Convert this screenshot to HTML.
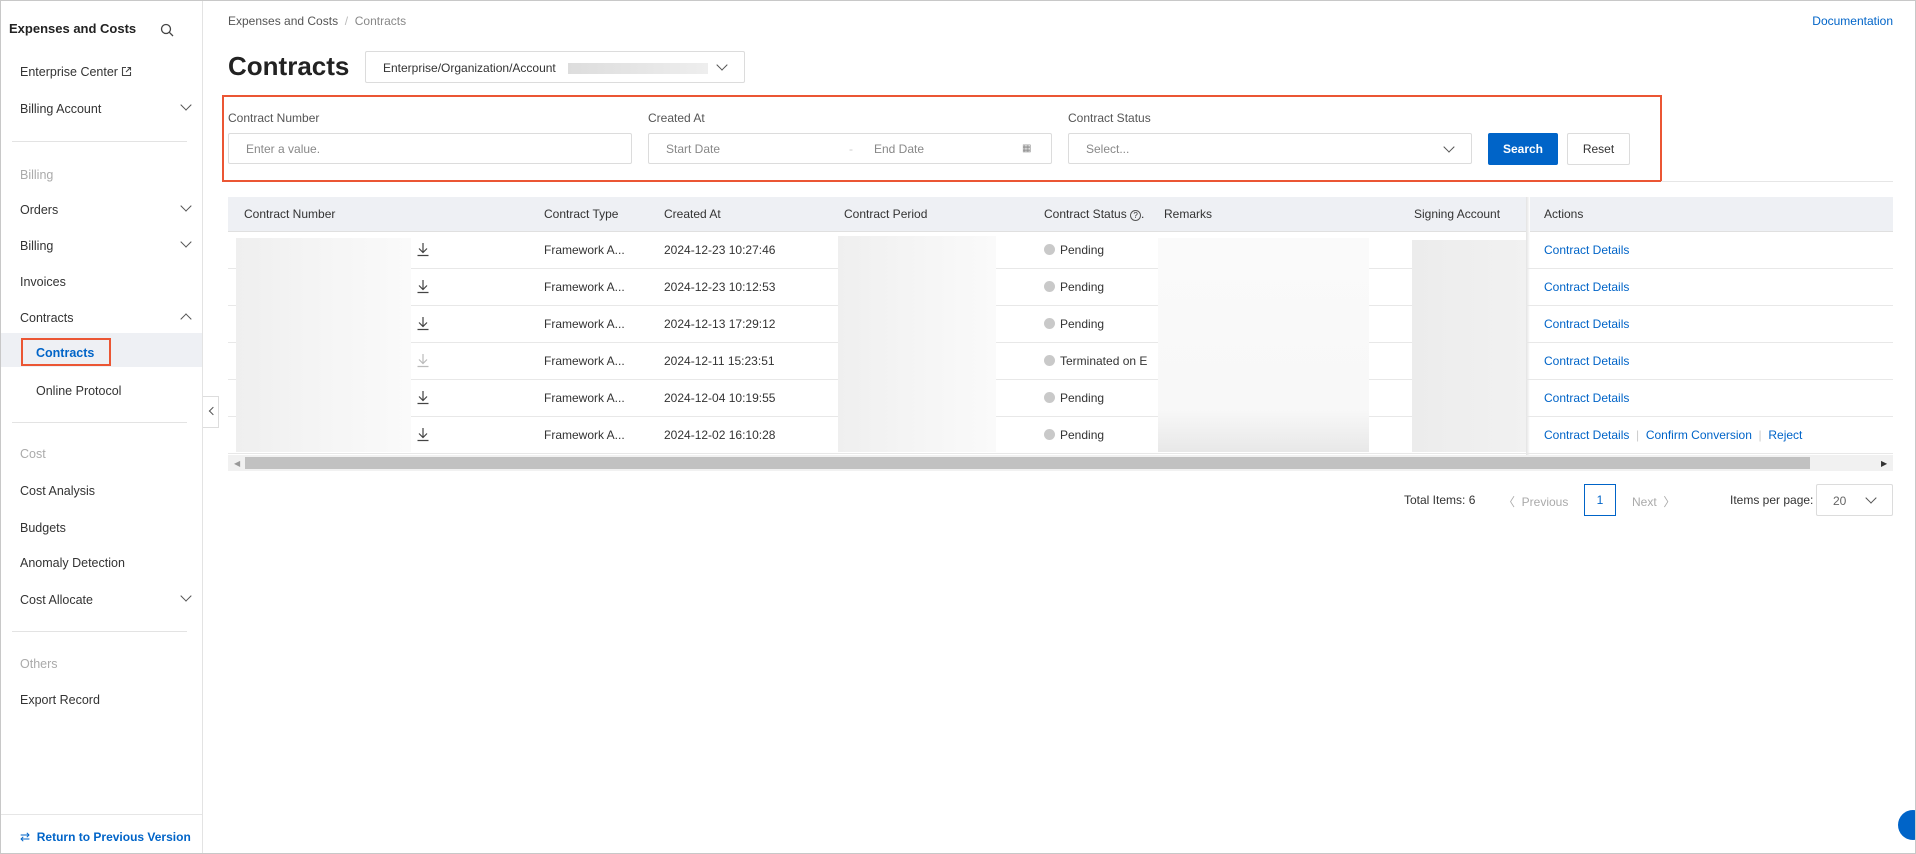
<!DOCTYPE html>
<html><head><meta charset="utf-8"><style>
*{box-sizing:border-box;margin:0;padding:0}
body{width:1916px;height:854px;position:relative;overflow:hidden;background:#fff;font-family:"Liberation Sans",sans-serif;font-size:12px;color:#333;}
.a{position:absolute;white-space:nowrap}
.frame{position:absolute;left:0;top:0;width:1916px;height:854px;border:1px solid #c8c8c8;z-index:50;pointer-events:none}
.side{position:absolute;left:0;top:0;width:203px;height:854px;border-right:1px solid #e3e3e3;background:#fff}
.si{position:absolute;left:20px;font-size:12.5px;color:#333}
.grey{color:#aaa}
.div{position:absolute;left:12px;width:175px;height:1px;background:#e3e3e3}
.chev{position:absolute;width:8px;height:8px;border-right:1.3px solid #555;border-bottom:1.3px solid #555}
.inp{position:absolute;height:31px;border:1px solid #dcdcdc;background:#fff;border-radius:2px}
.ph{position:absolute;top:8px;color:#888;font-size:12px}
.th{position:absolute;top:0;line-height:35px;font-weight:normal;color:#333}
.rowl{position:absolute;left:228px;width:1665px;height:1px;background:#e8e8e8}
.cell{position:absolute;font-size:12px;color:#333}
.blur{position:absolute;background:linear-gradient(90deg,#efefef,#f6f6f6 60%,#fafafa)}
.lnk{color:#0064c8}
.dot{display:inline-block;width:11px;height:11px;border-radius:50%;background:#c9c9c9;vertical-align:-1px;margin-right:5px}
</style></head><body>
<div class="frame"></div>
<div class="side">
 <div class="a" style="left:9px;top:21px;font-size:13px;font-weight:bold;color:#222">Expenses and Costs</div>
 <svg class="a" style="left:160px;top:23px" width="14" height="14" viewBox="0 0 14 14"><circle cx="6" cy="6" r="4.5" fill="none" stroke="#444" stroke-width="1.3"/><path d="M9.3 9.3L13 13" stroke="#444" stroke-width="1.3"/></svg>
 <div class="si" style="top:65px">Enterprise Center <svg width="11" height="11" viewBox="0 0 11 11" style="vertical-align:-1px"><path d="M5 1.5H1.5v8h8V6M6.5 1.5h3v3M9.5 1.5L5 6" fill="none" stroke="#444" stroke-width="1.1"/></svg></div>
 <div class="si" style="top:102px">Billing Account</div><div class="chev" style="left:182px;top:101px;transform:rotate(45deg)"></div>
 <div class="div" style="top:141px"></div>
 <div class="si grey" style="top:168px">Billing</div>
 <div class="si" style="top:203px">Orders</div><div class="chev" style="left:182px;top:202px;transform:rotate(45deg)"></div>
 <div class="si" style="top:239px">Billing</div><div class="chev" style="left:182px;top:238px;transform:rotate(45deg)"></div>
 <div class="si" style="top:275px">Invoices</div>
 <div class="si" style="top:311px">Contracts</div><div class="chev" style="left:182px;top:315px;transform:rotate(-135deg)"></div>
 <div class="a" style="left:1px;top:333px;width:201px;height:34px;background:#eef0f4"></div>
 <div class="a" style="left:21px;top:338px;width:90px;height:28px;border:2px solid #eb5634"></div>
 <div class="si" style="left:36px;top:346px;color:#0064c8;font-weight:bold">Contracts</div>
 <div class="si" style="left:36px;top:384px">Online Protocol</div>
 <div class="div" style="top:422px"></div>
 <div class="si grey" style="top:447px">Cost</div>
 <div class="si" style="top:484px">Cost Analysis</div>
 <div class="si" style="top:521px">Budgets</div>
 <div class="si" style="top:556px">Anomaly Detection</div>
 <div class="si" style="top:593px">Cost Allocate</div><div class="chev" style="left:182px;top:592px;transform:rotate(45deg)"></div>
 <div class="div" style="top:631px"></div>
 <div class="si grey" style="top:657px">Others</div>
 <div class="si" style="top:693px">Export Record</div>
 <div class="a" style="left:1px;top:814px;width:201px;height:1px;background:#e6e6e6"></div>
 <div class="si" style="top:830px;color:#0064c8;font-weight:bold;font-size:12px"><span style="font-weight:normal">⇄</span>&nbsp; Return to Previous Version</div>
</div>
<div class="a" style="left:203px;top:396px;width:16px;height:32px;border:1px solid #ddd;border-left:none;background:#fff"></div>
<div class="chev" style="left:210px;top:408px;width:6px;height:6px;transform:rotate(135deg)"></div>

<div class="a" style="left:228px;top:14px;color:#555">Expenses and Costs <span style="color:#bbb">&nbsp;/&nbsp;</span> <span style="color:#888">Contracts</span></div>
<div class="a lnk" style="right:23px;top:14px">Documentation</div>
<div class="a" style="left:228px;top:51px;font-size:26px;font-weight:bold;color:#222">Contracts</div>
<div class="inp" style="left:365px;top:51px;width:380px;height:32px"><span class="ph" style="left:17px;color:#333;top:9px">Enterprise/Organization/Account</span><div class="a" style="left:202px;top:11px;width:140px;height:11px;background:linear-gradient(90deg,#ddd,#eee)"></div><div class="chev" style="left:352px;top:9px;transform:rotate(45deg)"></div></div>

<div class="a" style="left:222px;top:95px;width:1440px;height:87px;border:2px solid #eb5634"></div>
<div class="a" style="left:1661px;top:181px;width:232px;height:1px;background:#e6e6e6"></div>
<div class="a" style="left:228px;top:111px;color:#555">Contract Number</div>
<div class="a" style="left:648px;top:111px;color:#555">Created At</div>
<div class="a" style="left:1068px;top:111px;color:#555">Contract Status</div>
<div class="inp" style="left:228px;top:133px;width:404px"><span class="ph" style="left:17px">Enter a value.</span></div>
<div class="inp" style="left:648px;top:133px;width:404px"><span class="ph" style="left:17px">Start Date</span><span class="ph" style="left:200px;color:#ccc">-</span><span class="ph" style="left:225px">End Date</span><span class="ph" style="left:373px;font-size:10px;top:9px">▦</span></div>
<div class="inp" style="left:1068px;top:133px;width:404px"><span class="ph" style="left:17px">Select...</span><div class="chev" style="left:376px;top:9px;transform:rotate(45deg)"></div></div>
<div class="a" style="left:1488px;top:133px;width:70px;height:32px;background:#0064c8;border-radius:2px;color:#fff;font-weight:bold;text-align:center;line-height:32px">Search</div>
<div class="a" style="left:1567px;top:133px;width:63px;height:32px;border:1px solid #dcdcdc;border-radius:2px;color:#333;text-align:center;line-height:30px">Reset</div>

<div class="a" style="left:228px;top:197px;width:1665px;height:35px;background:#eef0f4;border-bottom:1px solid #e0e0e0">
 <div class="th" style="left:16px">Contract Number</div>
 <div class="th" style="left:316px">Contract Type</div>
 <div class="th" style="left:436px">Created At</div>
 <div class="th" style="left:616px">Contract Period</div>
 <div class="th" style="left:816px">Contract Status <span style="display:inline-block;width:11px;height:11px;border:1px solid #555;border-radius:50%;font-size:8px;line-height:9px;text-align:center;vertical-align:0">?</span>.</div>
 <div class="th" style="left:936px">Remarks</div>
 <div class="th" style="left:1186px">Signing Account</div>
 <div class="th" style="left:1316px">Actions</div>
</div>
<div class="a" style="left:1526px;top:197px;width:4px;height:258px;background:linear-gradient(90deg,#e2e2e2,#fff)"></div>
<div class="rowl" style="top:268px"></div><div class="rowl" style="top:305px"></div><div class="rowl" style="top:342px"></div><div class="rowl" style="top:379px"></div><div class="rowl" style="top:416px"></div><div class="rowl" style="top:453px"></div>
<div class="blur" style="left:236px;top:238px;width:175px;height:214px"></div>
<div class="blur" style="left:838px;top:236px;width:158px;height:216px"></div>
<div class="blur" style="left:1158px;top:238px;width:211px;height:214px;background:linear-gradient(180deg,#fafafa,#f8f8f8 80%,#e8e8e8)"></div>
<div class="blur" style="left:1412px;top:240px;width:114px;height:212px;background:linear-gradient(90deg,#ececec,#f1f1f1)"></div>

<div id="rows"></div>
<script>
var d=[["2024-12-23 10:27:46","Pending"],["2024-12-23 10:12:53","Pending"],["2024-12-13 17:29:12","Pending"],["2024-12-11 15:23:51","Terminated on E"],["2024-12-04 10:19:55","Pending"],["2024-12-02 16:10:28","Pending"]];
var h="";d.forEach(function(r,i){var y=243+i*37;var c=i==3?"#bbb":"#444";
h+='<svg class="a" style="left:416px;top:'+(y-1)+'px" width="14" height="15" viewBox="0 0 14 15"><path d="M7 1v9M3 6.5l4 4 4-4M1.5 13.5h11" fill="none" stroke="'+c+'" stroke-width="1.2"/></svg>';
h+='<div class="cell" style="left:544px;top:'+y+'px">Framework A...</div>';
h+='<div class="cell" style="left:664px;top:'+y+'px">'+r[0]+'</div>';
h+='<div class="cell" style="left:1044px;top:'+y+'px"><span class="dot"></span>'+r[1]+'</div>';
h+='<div class="cell lnk" style="left:1544px;top:'+y+'px">Contract Details'+(i==5?' <span style="color:#ccc">&nbsp;|&nbsp;</span> Confirm Conversion <span style="color:#ccc">&nbsp;|&nbsp;</span> Reject':'')+'</div>';});
document.getElementById("rows").innerHTML=h;
</script>
<div class="a" style="left:228px;top:455px;width:1665px;height:16px;background:#f1f1f1"></div>
<div class="a" style="left:245px;top:457px;width:1565px;height:12px;background:#c1c1c1"></div>
<div class="a" style="left:234px;top:459px;font-size:8px;color:#999">◀</div>
<div class="a" style="left:1881px;top:459px;font-size:8px;color:#333">▶</div>

<div class="a" style="left:1404px;top:493px">Total Items: 6</div>
<div class="a" style="left:1503px;top:493px;color:#aaa">〈 &nbsp;Previous</div>
<div class="a" style="left:1584px;top:484px;width:32px;height:32px;border:1px solid #0064c8;color:#0064c8;text-align:center;line-height:30px">1</div>
<div class="a" style="left:1632px;top:493px;color:#aaa">Next &nbsp;〉</div>
<div class="a" style="left:1730px;top:493px">Items per page:</div>
<div class="inp" style="left:1816px;top:484px;width:77px;height:32px"><span class="ph" style="left:16px;top:9px;color:#666">20</span><div class="chev" style="left:50px;top:9px;transform:rotate(45deg)"></div></div>
<div class="a" style="left:1898px;top:810px;width:30px;height:30px;border-radius:50%;background:#0064c8"></div>
</body></html>
